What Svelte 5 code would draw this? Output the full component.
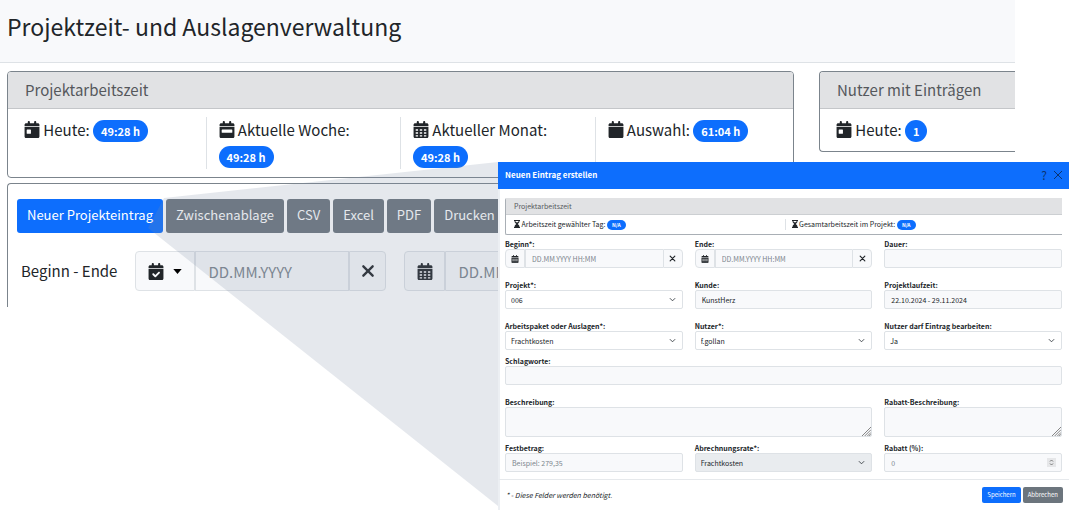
<script>
	const calendar = 'M96 32V64H48C21.500 64 0 85.500 0 112v48H448V112c0-26.500-21.500-48-48-48H352V32c0-17.700-14.300-32-32-32s-32 14.300-32 32V64H160V32c0-17.700-14.300-32-32-32S96 14.300 96 32zM448 184H0V464c0 26.500 21.500 48 48 48H400c26.500 0 48-21.500 48-48V184z';

	// cut-outs in the calendar sheet
	const marks = {
		empty: '',
		day: 'M80 256h96c9 0 16 7 16 16v96c0 9-7 16-16 16H80c-9 0-16-7-16-16v-96c0-9 7-16 16-16z',
		week: 'M80 256h288c9 0 16 7 16 16v64c0 9-7 16-16 16H80c-9 0-16-7-16-16v-64c0-9 7-16 16-16z',
		month: 'M64 246h72v50H64zM188 246h72v50h-72zM312 246h72v50h-72zM64 336h72v50H64zM188 336h72v50h-72zM312 336h72v50h-72zM64 426h72v38H64zM188 426h72v38h-72zM312 426h72v38h-72z',
		check: 'M335 311c11-11 11-29 0-40s-29-11-40 0l-91 91-43-43c-11-11-29-11-40 0s-11 29 0 40l63 63c11 11 29 11 40 0z'
	};

	const times = [
		{ label: 'Heute:', icon: 'day', value: '49:28 h' },
		{ label: 'Aktuelle Woche:', icon: 'week', value: '49:28 h' },
		{ label: 'Aktueller Monat:', icon: 'month', value: '49:28 h' },
		{ label: 'Auswahl:', icon: 'empty', value: '61:04 h' }
	];
	const exportsList = ['Zwischenablage', 'CSV', 'Excel', 'PDF', 'Drucken'];

	let begin = $state('');
	let end = $state('');
	let project = $state('006');
</script>

{#snippet cal(kind)}
	<svg class="icon" viewBox="0 0 448 512" aria-hidden="true">
		<path fill-rule="evenodd" d={calendar + marks[kind]} />
	</svg>
{/snippet}

{#snippet cross()}
	<svg class="cross" viewBox="0 0 12 12" aria-hidden="true"><path d="M2 2l8 8M10 2l-8 8" /></svg>
{/snippet}

{#snippet hourglass()}
	<svg class="glass" viewBox="0 0 384 512" aria-hidden="true">
		<path d="M0 0h384v64h-32v11c0 42-17 83-47 113l-68 68 68 68c30 30 47 71 47 113v11h32v64H0v-64h32v-11c0-42 17-83 47-113l68-68-68-68C49 158 32 117 32 75V64H0zM96 64c0 40 8 60 30 80h132c22-20 30-40 30-80z" fill-rule="evenodd" />
	</svg>
{/snippet}

{#snippet dateField(id, label)}
	<div class="field">
		<label for={id}>{label}</label>
		<div class="group">
			<button type="button" aria-label="Kalender">{@render cal('month')}</button>
			<input {id} type="text" placeholder="DD.MM.YYYY HH:MM" />
			<button type="button" aria-label="Leeren">{@render cross()}</button>
		</div>
	</div>
{/snippet}

{#snippet selectField(id, label, value, disabled)}
	<div class="field">
		<label for={id}>{label}</label>
		<div class="stack">
			<select {id} {disabled}><option>{value}</option></select>
			<svg class="chevron" viewBox="0 0 16 16" aria-hidden="true"><path d="M2 5l6 6 6-6" /></svg>
		</div>
	</div>
{/snippet}

{#snippet textField(id, label, value, placeholder)}
	<div class="field">
		<label for={id}>{label}</label>
		<input {id} type="text" {value} {placeholder} />
	</div>
{/snippet}

{#snippet areaField(id, label)}
	<div class="field">
		<label for={id}>{label}</label>
		<div class="stack">
			<textarea {id}></textarea>
			<svg class="grip" viewBox="0 0 10 10" aria-hidden="true"><path d="M0 10L10 0M3 10l7-7M6 10l4-4M8 10l2-2" /></svg>
		</div>
	</div>
{/snippet}

<div class="stage">
	<div class="page">
		<header><h1>Projektzeit- und Auslagenverwaltung</h1></header>

		<div class="cards">
			<section class="card">
				<h2>Projektarbeitszeit</h2>
				<div class="times">
					{#each times as t}
						<div class="time">{@render cal(t.icon)} {t.label} <span class="badge">{t.value}</span></div>
					{/each}
				</div>
			</section>
			<section class="card users">
				<h2>Nutzer mit Einträgen</h2>
				<div class="times">
					<div class="time">{@render cal('day')} Heute: <span class="badge">1</span></div>
				</div>
			</section>
		</div>

		<section class="panel">
			<div class="toolbar">
				<button type="button" class="primary">Neuer Projekteintrag</button>
				{#each exportsList as name}
					<button type="button">{name}</button>
				{/each}
			</div>
			<div class="range">
				<label for="from">Beginn - Ende</label>
				<div class="group">
					<button type="button" class="menu" aria-label="Zeitraum">
						{@render cal('check')}
						<svg class="caret" viewBox="0 0 10 6" aria-hidden="true"><path d="M0 0h10L5 6z" /></svg>
					</button>
					<input id="from" type="text" placeholder="DD.MM.YYYY" bind:value={begin} />
					<button type="button" class="clear" aria-label="Leeren">{@render cross()}</button>
				</div>
				<div class="group">
					<button type="button" class="pick" aria-label="Kalender">{@render cal('month')}</button>
					<input type="text" placeholder="DD.MM.YYYY" aria-label="Ende" bind:value={end} />
				</div>
			</div>
		</section>
	</div>

	<svg class="beam" viewBox="0 0 352 346" preserveAspectRatio="none" aria-hidden="true">
		<path d="M0 66L16 36L350 0H352V346L350 344Z" />
	</svg>

	<div class="modal" role="dialog" aria-labelledby="modal-title">
		<div class="modal-head">
			<h2 id="modal-title">Neuen Eintrag erstellen</h2>
			<button type="button" aria-label="Hilfe">?</button>
			<button type="button" aria-label="Schließen">
				<svg class="close" viewBox="0 0 10 10" aria-hidden="true"><path d="M1 1l8 8M9 1l-8 8" /></svg>
			</button>
		</div>

		<form>
			<div class="summary">
				<h3>Projektarbeitszeit</h3>
				<div class="summary-row">
					<div>{@render hourglass()} Arbeitszeit gewählter Tag: <span class="badge">N/A</span></div>
					<div>{@render hourglass()} Gesamtarbeitszeit im Projekt: <span class="badge">N/A</span></div>
				</div>
			</div>

			<div class="row">
				{@render dateField('begin', 'Beginn*:')}
				{@render dateField('end', 'Ende:')}
				{@render textField('duration', 'Dauer:', '', '')}
			</div>
			<div class="row">
				{@render selectField('project', 'Projekt*:', project, false)}
				{@render textField('customer', 'Kunde:', 'KunstHerz', '')}
				{@render textField('runtime', 'Projektlaufzeit:', '22.10.2024 - 29.11.2024', '')}
			</div>
			<div class="row">
				{@render selectField('package', 'Arbeitspaket oder Auslagen*:', 'Frachtkosten', false)}
				{@render selectField('user', 'Nutzer*:', 'f.gollan', false)}
				{@render selectField('editable', 'Nutzer darf Eintrag bearbeiten:', 'Ja', false)}
			</div>
			<div class="row single tight">
				{@render textField('tags', 'Schlagworte:', '', '')}
			</div>
			<div class="row wide">
				{@render areaField('description', 'Beschreibung:')}
				{@render areaField('discount-text', 'Rabatt-Beschreibung:')}
			</div>
			<div class="row tight">
				{@render textField('amount', 'Festbetrag:', '', 'Beispiel: 279,35')}
				{@render selectField('rate', 'Abrechnungsrate*:', 'Frachtkosten', true)}
				<div class="field">
					<label for="discount">Rabatt (%):</label>
					<div class="stack">
						<input id="discount" type="number" placeholder="0" />
						<svg class="spin" viewBox="0 0 9 9" aria-hidden="true">
							<rect width="9" height="9" />
							<path d="M3 3.500L4.500 2L6 3.500M3 5.500L4.500 7L6 5.500" />
						</svg>
					</div>
				</div>
			</div>
		</form>

		<footer>
			<em>* - Diese Felder werden benötigt.</em>
			<button type="button" class="primary">Speichern</button>
			<button type="button">Abbrechen</button>
		</footer>
	</div>
</div>

<style>
	:global(body) {
		background: #fff;
	}

	.stage {
		position: relative;
		overflow: hidden;
		min-height: 100vh;
		font-family: "Noto Sans CJK SC", "Open Sans", sans-serif;
		color: #212529;
	}

	.stage * {
		box-sizing: border-box;
	}

	button, input, select, textarea {
		font: inherit;
		color: inherit;
		margin: 0;
		padding: 0;
		border: 0;
		min-width: 0;
	}

	h1, h2, h3 {
		margin: 0;
		font-weight: 400;
	}

	svg {
		display: block;
	}

	.page {
		margin-right: 54px;
		overflow: hidden;
		font-size: 15px;
		line-height: 26px;
	}

	header {
		height: 63px;
		padding: 10px 7px;
		background: #f8f9fb;
		border-bottom: 1px solid #dee2e6;
	}

	h1 {
		font-size: 23px;
		line-height: 32px;
	}

	.cards {
		display: flex;
		align-items: flex-start;
		gap: 25px;
		padding: 8px 0 5px 7px;
	}

	.card {
		flex: 1;
		border: 1px solid #7b848c;
		border-radius: 4px;
		overflow: hidden;
	}

	.card.users {
		flex: 0 0 196px;
		border-right: 0;
		border-radius: 4px 0 0 4px;
	}

	.card h2 {
		padding: 5px 17px;
		background: #e1e2e4;
		border-bottom: 1px solid #c4c6c9;
		font-size: 15px;
		color: #55585c;
	}

	.times {
		display: flex;
		padding: 8px 4px;
	}

	.time {
		flex: 1;
		padding: 0 12px;
		border-left: 1px solid #dee2e6;
	}

	.time:first-child {
		border-left: 0;
	}

	.icon {
		width: 16px;
		height: 17px;
		fill: #212529;
	}

	.time .icon {
		display: inline-block;
		vertical-align: -2px;
	}

	.badge {
		display: inline-block;
		padding: 0 8px;
		border-radius: 11px;
		background: #0d6efd;
		color: #fff;
		font-size: 11px;
		font-weight: 700;
		line-height: 22px;
	}

	.panel {
		margin-left: 7px;
		height: 124px;
		padding: 15px 9px;
		border: 1px solid #7b848c;
		border-width: 1px 0 0 1px;
		border-radius: 4px 0 0 0;
	}

	.toolbar {
		display: flex;
		gap: 3px;
	}

	.toolbar button {
		height: 34px;
		padding: 0 10px 2px;
		border-radius: 3px;
		background: #6c757d;
		color: #fff;
		font-size: 13px;
	}

	.toolbar .primary, footer .primary {
		background: #0d6efd;
	}

	.range {
		display: flex;
		align-items: center;
		gap: 18px;
		padding: 18px 4px;
	}

	.group {
		display: flex;
	}

	.range .group > * {
		height: 40px;
		border: 1px solid #dee2e6;
		background: #f8f9fb;
	}

	.group > :first-child {
		border-radius: 4px 0 0 4px;
	}

	.group > :last-child {
		border-radius: 0 4px 4px 0;
	}

	.range input {
		width: 154px;
		padding: 0 12px;
	}

	.group button {
		display: flex;
		align-items: center;
		justify-content: center;
	}

	.menu {
		width: 60px;
		gap: 9px;
	}

	.pick {
		width: 41px;
	}

	.clear {
		width: 37px;
	}

	.caret {
		width: 9px;
		height: 5px;
	}

	.cross {
		width: 14px;
		height: 14px;
		fill: none;
		stroke: #212529;
		stroke-width: 2;
		stroke-linecap: round;
	}

	input::placeholder {
		color: #7c858d;
		opacity: 1;
	}

	.beam {
		position: absolute;
		top: 162px;
		left: 148px;
		width: 352px;
		height: 346px;
		fill: #7d8ca5;
		fill-opacity: 0.2;
		pointer-events: none;
	}

	.modal {
		position: absolute;
		top: 162px;
		left: 498px;
		right: 0;
		background: #fff;
		font-size: 7px;
		line-height: 10px;
	}

	.modal-head {
		display: flex;
		align-items: center;
		gap: 6px;
		height: 27px;
		padding: 0 6px 1px 7px;
		background: #0d6efd;
	}

	.modal-head h2 {
		flex: 1;
		color: #fff;
		font-size: 8px;
		font-weight: 700;
	}

	.modal-head button {
		background: none;
		color: #0b3472;
		font-size: 12px;
	}

	.close {
		width: 10px;
		height: 10px;
		fill: none;
		stroke: #0b3472;
	}

	form, footer {
		border-left: 2px solid #eceff3;
	}

	form {
		padding: 9px 7px 7px 5px;
	}

	.summary {
		margin-bottom: 4px;
		border: 1px solid #a9afb5;
		border-width: 0 0 1px 1px;
		border-radius: 2px 0 0 2px;
	}

	.summary h3 {
		padding: 3px 8px;
		background: #e1e2e4;
		border-bottom: 1px solid #cccfd2;
		font-size: 7px;
		color: #55585c;
	}

	.summary-row {
		display: flex;
		padding: 4px 0;
	}

	.summary-row div {
		flex: 1;
		padding-left: 8px;
	}

	.summary-row div + div {
		border-left: 1px solid #dee2e6;
		padding-left: 6px;
	}

	.glass {
		display: inline-block;
		width: 6px;
		height: 8px;
		vertical-align: -1px;
		fill: #212529;
	}

	.modal .badge {
		padding: 0 5px;
		border-radius: 5px;
		font-size: 5px;
		line-height: 10px;
	}

	.row {
		display: grid;
		grid-template-columns: repeat(3, 1fr);
		gap: 12px;
		margin-bottom: 12px;
	}

	.row.single {
		grid-template-columns: 1fr;
	}

	.row.wide > :first-child {
		grid-column: span 2;
	}

	.row:last-child {
		margin-bottom: 0;
	}

	.row.tight {
		margin-top: -6px;
	}

	.field {
		display: grid;
	}

	.field label {
		font-weight: 700;
	}

	.field input, .field select, .field textarea, .field button {
		width: 100%;
		height: 19px;
		border: 1px solid #dee2e6;
		border-radius: 2px;
		background: #f8f9fb;
	}

	.field input {
		padding: 0 6px;
	}

	.field .group input {
		flex: 1;
		border-radius: 0;
		border-width: 1px 0;
		border-left: 1px solid #dee2e6;
	}

	.field .group button {
		flex: 0 0 20px;
	}

	.field .group .icon {
		width: 8px;
		height: 8px;
	}

	.field .group .cross {
		width: 7px;
		height: 7px;
	}

	.field select {
		appearance: none;
		padding: 0 5px;
		background: #fff;
		opacity: 1;
	}

	.field select:disabled {
		background: #e9ecef;
	}

	.field textarea {
		display: block;
		height: 30px;
		resize: none;
	}

	.field input[type='number'] {
		appearance: textfield;
	}

	.stack {
		display: grid;
	}

	.stack > * {
		grid-area: 1 / 1;
	}

	.stack svg {
		pointer-events: none;
		justify-self: end;
		align-self: center;
	}

	.chevron {
		width: 7px;
		height: 7px;
		margin-right: 7px;
		fill: none;
		stroke: #343a40;
		stroke-width: 2;
	}

	.stack .grip {
		width: 9px;
		height: 9px;
		margin: 1px;
		align-self: end;
		stroke: #777;
		stroke-width: 1;
	}

	.spin {
		width: 9px;
		height: 9px;
		margin-right: 6px;
	}

	.spin rect {
		fill: #e6e7e9;
	}

	.spin path {
		fill: none;
		stroke: #777;
	}

	footer {
		display: flex;
		align-items: center;
		gap: 2px;
		padding: 7px 6px 8px 6px;
		border-top: 1px solid #e6e9ec;
	}

	footer em {
		flex: 1;
	}

	footer button {
		height: 16px;
		padding: 0 5px;
		border-radius: 2px;
		background: #6c757d;
		color: #fff;
		font-size: 6px;
	}
</style>
